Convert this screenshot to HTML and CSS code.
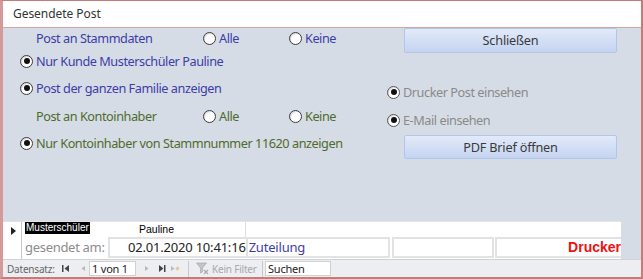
FILE: index.html
```html
<!DOCTYPE html>
<html lang="de">
<head>
<meta charset="utf-8">
<title>Gesendete Post</title>
<link rel="stylesheet" href="styles.css">
</head>
<body>
<div class="win">
  <div class="title">Gesendete Post</div>
  <div class="main">
    <div class="left">
      <div class="row r1 opts blue">
        <span class="lbl">Post an Stammdaten</span>
        <span class="opt"><i class="radio"></i>Alle</span>
        <span class="opt"><i class="radio"></i>Keine</span>
      </div>
      <div class="row r2 blue"><i class="radio on"></i>Nur Kunde Musterschüler Pauline</div>
      <div class="row r3 blue"><i class="radio on"></i>Post der ganzen Familie anzeigen</div>
      <div class="row r4 opts green">
        <span class="lbl">Post an Kontoinhaber</span>
        <span class="opt"><i class="radio"></i>Alle</span>
        <span class="opt"><i class="radio"></i>Keine</span>
      </div>
      <div class="row r5 green"><i class="radio on"></i>Nur Kontoinhaber von Stammnummer 11620 anzeigen</div>
    </div>
    <div class="right">
      <div class="btn b1">Schließen</div>
      <div class="rrow rr1"><i class="radio on"></i>Drucker Post einsehen</div>
      <div class="rrow rr2"><i class="radio on"></i>E-Mail einsehen</div>
      <div class="btn b2">PDF Brief öffnen</div>
    </div>
  </div>
  <div class="detail">
    <div class="sel"><span class="tri"></span></div>
    <div class="rows">
      <div class="drow1">
        <span class="c1"><span class="hl">Musterschüler</span></span>
        <span class="c2">Pauline</span>
        <span class="c3"></span>
      </div>
      <div class="drow2">
        <span class="glbl">gesendet am:</span>
        <span class="box date">02.01.2020 10:41:16</span>
        <span class="box zut">Zuteilung</span>
        <span class="box empty"></span>
        <span class="box drk">Drucker</span>
      </div>
    </div>
    <div class="dfill"></div>
  </div>
  <div class="nav">
    <span class="dlbl">Datensatz:</span>
    <svg class="ic first" width="8" height="9" viewBox="0 0 8 9"><rect x="0" y="1" width="1.5" height="7" fill="#444"/><path d="M7 1 L2.5 4.5 L7 8 Z" fill="#444"/></svg>
    <svg class="ic prev" width="6" height="9" viewBox="0 0 6 9"><path d="M5 2 L1.5 4.5 L5 7 Z" fill="#b8b8b8"/></svg>
    <span class="pos">1 von 1</span>
    <svg class="ic next" width="6" height="9" viewBox="0 0 6 9"><path d="M1 2 L4.5 4.5 L1 7 Z" fill="#b8b8b8"/></svg>
    <svg class="ic last" width="8" height="9" viewBox="0 0 8 9"><path d="M1 1 L5.5 4.5 L1 8 Z" fill="#444"/><rect x="6" y="1" width="1.5" height="7" fill="#444"/></svg>
    <svg class="ic new" width="10" height="9" viewBox="0 0 10 9"><path d="M1 2 L4.5 4.5 L1 7 Z" fill="#b8b8b8"/><path d="M7.5 2.5 L7.5 6.5 M5.5 4.5 L9.5 4.5 M6 3 L9 6 M9 3 L6 6" stroke="#e8c890" stroke-width="0.9"/></svg>
    <span class="sep"></span>
    <svg class="ic filt" width="13" height="13" viewBox="0 0 13 13"><path d="M0.5 1 L10.5 1 L6.5 6 L6.5 10 L4.5 11 L4.5 6 Z" fill="#c4c4c4" stroke="#aaa" stroke-width="0.7"/><path d="M8 8 L12 12 M12 8 L8 12" stroke="#aaa" stroke-width="1.2"/></svg>
    <span class="kf">Kein Filter</span>
    <span class="sep"></span>
    <span class="srch">Suchen</span>
    <span class="navfill"></span>
  </div>
</div>
</body>
</html>
```
FILE: styles.css
```css
html, body {
  margin: 0;
  padding: 0;
  background: #c98e8e;
}
.win {
  width: 643px;
  height: 279px;
  box-sizing: border-box;
  border-top: 1px solid #c77a7a;
  border-left: 3px solid #d49a9a;
  border-right: 2px solid #c77a7a;
  border-bottom: 2px solid #c77a7a;
  display: grid;
  grid-template-rows: 27px 193px 38px 18px;
  font-family: "Noto Sans", "Open Sans", sans-serif;
  overflow: hidden;
}
.title {
  background: #fff;
  border-bottom: 1px solid #d9a3a3;
  font-size: 12px;
  color: #333;
  padding-left: 10px;
  line-height: 26px;
  letter-spacing: -0.05px;
}
.main {
  background: #d6dce5;
  display: grid;
  grid-template-columns: 384px 1fr;
  font-size: 12.7px;
  letter-spacing: -0.45px;
}
.left {
  padding-left: 17px;
  display: flex;
  flex-direction: column;
}
.row {
  display: flex;
  align-items: center;
  white-space: nowrap;
}
.r1 { height: 20px; }
.r2 { height: 26px; }
.r3 { height: 28px; }
.r4 { height: 28px; }
.r5 { height: 26px; }
.opts {
  display: grid;
  grid-template-columns: 167px 86px auto;
  align-items: center;
  padding-left: 16px;
}
.opt {
  display: flex;
  align-items: center;
}
.blue { color: #3d3da8; }
.green { color: #4e6b2e; }
.radio {
  display: inline-block;
  box-sizing: border-box;
  width: 13px;
  height: 13px;
  border-radius: 50%;
  border: 1px solid #3a3a3a;
  background: #fff;
  margin-right: 3px;
  position: relative;
  flex: none;
  box-shadow: inset 1px 1px 1px rgba(0,0,0,0.15);
}
.radio.on::after {
  content: "";
  position: absolute;
  left: 2.5px;
  top: 2.5px;
  width: 6px;
  height: 6px;
  border-radius: 50%;
  background: #111;
}
.right {
  display: flex;
  flex-direction: column;
  padding-left: 17px;
  padding-right: 20px;
}
.btn {
  box-sizing: border-box;
  width: 213px;
  border: 1px solid #b3c5e8;
  border-radius: 2px;
  background: linear-gradient(#e3eaf9, #c4d4f1);
  color: #3a3a3a;
  text-align: center;
  font-size: 12.7px;
  letter-spacing: -0.2px;
}
.b1 { height: 25px; line-height: 23px; }
.b2 { height: 24px; line-height: 22px; margin-top: 5px; }
.rrow {
  display: flex;
  align-items: center;
  height: 20px;
  margin-left: -17px;
  color: #8a8a8a;
  white-space: nowrap;
}
.rrow .radio { border-color: #555; }
.rr1 { margin-top: 29px; }
.rr2 { margin-top: 8px; }

.detail {
  display: flex;
  background: #d6dce5;
}
.sel {
  width: 18px;
  background: #fff;
  border-right: 1px solid #c8c8c8;
  border-top: 1px solid #e0e0e0;
  position: relative;
  flex: none;
}
.tri {
  position: absolute;
  left: 8px;
  top: 5px;
  width: 0;
  height: 0;
  border-top: 4px solid transparent;
  border-bottom: 4px solid transparent;
  border-left: 5px solid #222;
}
.rows {
  width: 599px;
  background: #fff;
  display: flex;
  flex-direction: column;
  flex: none;
}
.drow1 {
  height: 16px;
  display: flex;
  border-top: 1px solid #e4e4e4;
  box-sizing: border-box;
  font-family: "Liberation Sans", Arial, sans-serif;
  font-size: 10px;
}
.c1 { width: 115px; padding-left: 3px; box-sizing: border-box; }
.hl {
  display: inline-block;
  background: #000;
  color: #fff;
  line-height: 12px;
  height: 12px;
  padding: 0 1px;
}
.c2 { width: 109px; line-height: 14px; padding-left: 2px; box-sizing: border-box; border-right: 1px solid #dedede; font-size: 10.5px; }
.c3 { flex: 1; }
.drow2 {
  height: 22px;
  display: flex;
  align-items: stretch;
}
.glbl {
  width: 86px;
  padding-left: 3px;
  box-sizing: border-box;
  color: #8c8c8c;
  font-size: 13px;
  letter-spacing: -0.3px;
  line-height: 20px;
  white-space: nowrap;
}
.box {
  box-sizing: border-box;
  border: 2px solid #e2e2e2;
  height: 21px;
  line-height: 17px;
  font-size: 13px;
  white-space: nowrap;
}
.date { width: 138px; text-align: right; color: #222; padding-right: 0; border-right: none; letter-spacing: -0.2px; }
.zut { width: 145px; color: #3d3da8; padding-left: 1px; letter-spacing: -0.2px; }
.empty { width: 102px; margin-left: 2px; }
.drk {
  width: 126px;
  margin-left: 1px;
  text-align: right;
  color: #ee1111;
  font-family: "Liberation Sans", Arial, sans-serif;
  font-weight: bold;
  font-size: 14px;
  padding-right: 0;
  border-right: none;
}
.dfill { flex: 1; }

.nav {
  display: flex;
  align-items: center;
  background: #eceef1;
  border-top: 1px solid #cfd2d6;
  font-size: 10px;
  letter-spacing: -0.2px;
  color: #666;
  white-space: nowrap;
}
.dlbl { margin-left: 4px; width: 52px; flex: none; }
.ic { flex: none; }
.first { margin-left: 3px; }
.prev { margin-left: 10px; }
.pos {
  margin-left: 3px;
  width: 47px;
  height: 15px;
  box-sizing: border-box;
  background: #fff;
  border: 1px solid #d0d0d0;
  color: #222;
  padding-left: 2px;
  line-height: 14px;
  font-size: 11px;
  flex: none;
}
.next { margin-left: 8px; }
.last { margin-left: 8px; }
.new { margin-left: 4px; }
.sep {
  width: 1px;
  height: 16px;
  background: #c8c8c8;
  margin-left: 8px;
  flex: none;
}
.filt { margin-left: 7px; }
.kf { margin-left: 3px; color: #a8a8a8; font-size: 10px; width: 44px; flex: none; }
.kf + .sep { margin-left: 6px; }
.srch {
  margin-left: 2px;
  width: 66px;
  height: 15px;
  box-sizing: border-box;
  background: #fff;
  border: 1px solid #d0d0d0;
  color: #222;
  padding-left: 2px;
  line-height: 13px;
  font-size: 11px;
  flex: none;
}
.navfill { flex: 1; }
```
